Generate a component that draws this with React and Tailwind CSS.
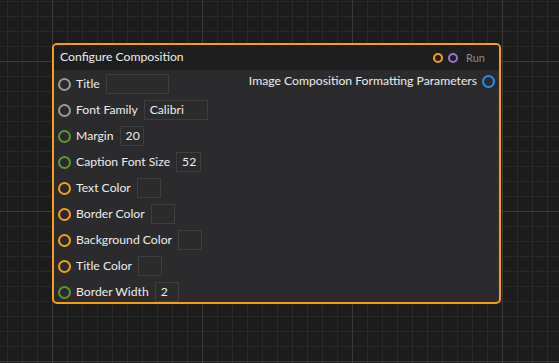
const inputs = [
  {label: "Title", color: "border-[#9a9a9a]", value: "", w: "w-[63px]"},
  {label: "Font Family", color: "border-[#9a9a9a]", value: "Calibri", w: "w-[64px]"},
  {label: "Margin", color: "border-[#5a9a2c]", value: "20", w: "w-[24px]"},
  {label: "Caption Font Size", color: "border-[#5a9a2c]", value: "52", w: "w-[25px]"},
  {label: "Text Color", color: "border-[#f5a00f]", value: "", w: "w-[24px]"},
  {label: "Border Color", color: "border-[#f5a00f]", value: "", w: "w-[24px]"},
  {label: "Background Color", color: "border-[#f5a00f]", value: "", w: "w-[24px]"},
  {label: "Title Color", color: "border-[#f5a00f]", value: "", w: "w-[24px]"},
  {label: "Border Width", color: "border-[#5a9a2c]", value: "2", w: "w-[24px]"},
];

const Port = ({color}) => (
  <span className={`block w-[13px] h-[13px] rounded-full border-2 ${color} shrink-0`}/>
);

const InputRow = ({label, color, value, w}) => (
  <div className="flex items-center h-[20px] whitespace-nowrap">
    <Port color={color}/>
    <span className="ml-[5px] text-[#ececec]">{label}</span>
    <div className={`ml-[6px] h-[20px] ${w} shrink-0 border border-[#3e3e3e] bg-[#2b2b2c] px-[5px] flex items-center text-[#ececec]`}>
      {value}
    </div>
  </div>
);

export default function App() {
  return (
    <div
      className="w-[559px] h-[363px] overflow-hidden pl-[52px] pt-[43px] bg-[#1c1c1c] bg-[linear-gradient(to_right,#3b3b3b_1px,transparent_1px),linear-gradient(to_bottom,#3b3b3b_1px,transparent_1px),linear-gradient(to_right,#282828_1px,transparent_1px),linear-gradient(to_bottom,#282828_1px,transparent_1px)] bg-[size:150px_150px,150px_150px,15px_15px,15px_15px] bg-[position:52px_0,0_61px,7px_0,0_1px]"
      style={{fontFamily: "Lato, 'Noto Sans', sans-serif"}}
    >
      <div className="w-[449px] h-[261px] border-2 border-[#f5a00f] rounded-[5px] bg-[#2b2b2d] overflow-hidden text-[12.2px] leading-none">
        <div className="h-[25px] bg-[#1e1e1e] flex items-center pl-[6px] pr-[14px] whitespace-nowrap">
          <span className="text-[#ececec]">Configure Composition</span>
          <div className="ml-auto flex items-center">
            <span className="block w-[10px] h-[10px] rounded-full border-2 border-[#f5a00f]"/>
            <span className="block w-[10px] h-[10px] rounded-full border-2 border-[#9a72d8] ml-[5px]"/>
            <span className="ml-[8px] text-[11px] text-[#8a8a8a]">Run</span>
          </div>
        </div>
        <div className="flex">
          <div className="flex flex-col gap-[6px] pt-[4px] pl-[4px] shrink-0">
            {inputs.map((item) => (
              <InputRow key={item.label} {...item}/>
            ))}
          </div>
          <div className="ml-auto pt-[1px] pr-[4px]">
            <div className="flex items-center h-[20px] whitespace-nowrap">
              <span className="text-[#ececec]">Image Composition Formatting Parameters</span>
              <span className="ml-[5px] block w-[13px] h-[13px] rounded-full border-2 border-[#2b8cee] shrink-0"/>
            </div>
          </div>
        </div>
      </div>
    </div>
  );
}
